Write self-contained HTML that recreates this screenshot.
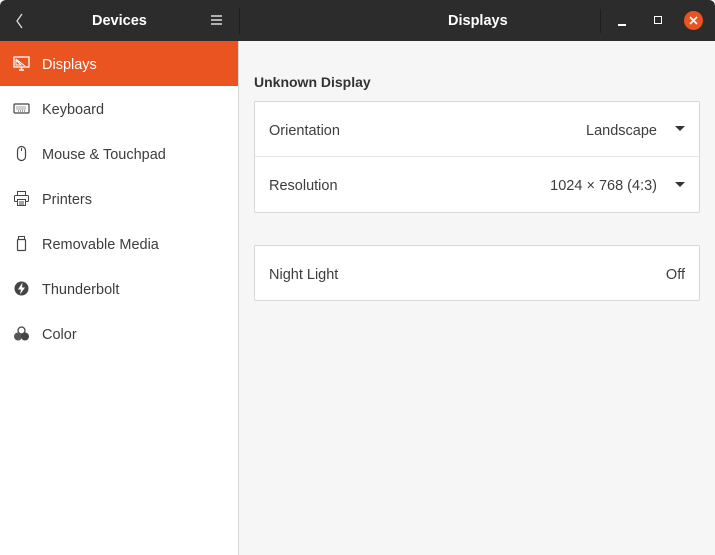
<!DOCTYPE html>
<html><head><style>
*{margin:0;padding:0;box-sizing:border-box}
body{width:715px;height:555px;overflow:hidden;font-family:"Liberation Sans",sans-serif;font-size:14px;color:#3d3d3d;background:#f6f6f7;position:relative}
.hdr{position:absolute;left:0;top:0;width:715px;height:41px;background:#2c2c2c;border-radius:6px 6px 0 0;color:#fff}
.side{position:absolute;left:0;top:41px;width:239px;height:514px;background:#fff;border-right:1px solid #d6d6d6}
.row{height:45px;display:flex;align-items:center;padding-left:42px;padding-top:2px;position:relative;color:#3d3d3d;font-size:14.5px}
.row.sel{background:#e95420;color:#fff}
.ic{position:absolute;left:13px;top:14px;width:17px;height:17px}
.main{position:absolute;left:240px;top:41px;right:0;bottom:0}
.box{position:absolute;left:14px;width:446px;background:#fff;border:1px solid #d8d8d8;border-radius:2px}
.br{height:55px;display:flex;align-items:center;padding:3px 14px 0;justify-content:space-between;font-size:14.5px}
.tri{display:inline-block;width:0;height:0;border-left:5px solid transparent;border-right:5px solid transparent;border-top:5px solid #333;margin-left:18px;vertical-align:middle;position:relative;top:-2px}
</style></head><body>
<div class="hdr">
<svg style="position:absolute;left:15px;top:13px" width="10" height="16"><path d="M7 1 L2 8 L7 15" stroke="#ddd" stroke-width="1.3" fill="none"/></svg>
<div style="position:absolute;left:92px;top:13px;font-weight:bold;font-size:14.5px">Devices</div>
<svg style="position:absolute;left:211px;top:15px" width="11" height="10"><path d="M0 1H11M0 5H11M0 9H11" stroke="#fff" stroke-width="1.2"/></svg>
<div style="position:absolute;left:239px;top:8px;width:1px;height:26px;background:#1e1e1e"></div>
<div style="position:absolute;left:448px;top:13px;font-weight:bold;font-size:14.5px">Displays</div>
<div style="position:absolute;left:600px;top:9px;width:1px;height:24px;background:#1e1e1e"></div>
<div style="position:absolute;left:618px;top:24px;width:8px;height:1.5px;background:#fff"></div>
<div style="position:absolute;left:654px;top:16px;width:8px;height:8px;border:1.3px solid #fff"></div>
<div style="position:absolute;left:684px;top:11px;width:19px;height:19px;border-radius:50%;background:#e95420"></div>
<svg style="position:absolute;left:689px;top:16px" width="9" height="9"><path d="M1 1L8 8M8 1L1 8" stroke="#fff" stroke-width="1.6"/></svg>
</div>
<div class="side">
<div class="row sel"><svg class="ic" viewBox="0 0 17 17"><rect x="1" y="2" width="15" height="10" fill="none" stroke="#fff" stroke-width="1.3"/><path d="M3 4L12 11M3 10L3 5L8 10Z" stroke="#fff" fill="none"/><path d="M6 15H11M8.5 12V15" stroke="#fff" stroke-width="1.5"/></svg>Displays</div>
<div class="row"><svg class="ic" viewBox="0 0 17 17"><rect x="1" y="4" width="15" height="9" rx="1" fill="none" stroke="#444" stroke-width="1.2"/><path d="M3.5 7H13.5M3.5 9H13.5M5 11H12" stroke="#444" stroke-dasharray="1 1"/></svg>Keyboard</div>
<div class="row"><svg class="ic" viewBox="0 0 17 17"><rect x="4.5" y="1.5" width="8" height="14" rx="4" fill="none" stroke="#444" stroke-width="1.2"/><path d="M8.5 3V6" stroke="#444"/></svg>Mouse &amp; Touchpad</div>
<div class="row"><svg class="ic" viewBox="0 0 17 17"><rect x="4.5" y="1.5" width="8" height="4" fill="none" stroke="#444"/><rect x="1.5" y="5.5" width="14" height="6" rx="1" fill="none" stroke="#444"/><rect x="4.5" y="9.5" width="8" height="6" fill="#fff" stroke="#444"/><path d="M6 12H11M6 14H11" stroke="#444"/></svg>Printers</div>
<div class="row"><svg class="ic" viewBox="0 0 17 17"><rect x="5.5" y="1.5" width="6" height="3" fill="none" stroke="#444"/><rect x="4.5" y="4.5" width="8" height="11" rx="1" fill="none" stroke="#444" stroke-width="1.2"/></svg>Removable Media</div>
<div class="row"><svg class="ic" viewBox="0 0 17 17"><circle cx="8.5" cy="8.5" r="7" fill="#444"/><path d="M9.5 2.5L5 9.5H8L7 14.5L12 7.5H9Z" fill="#fff"/></svg>Thunderbolt</div>
<div class="row"><svg class="ic" viewBox="0 0 17 17"><circle cx="8.5" cy="5.5" r="3.5" fill="none" stroke="#444" stroke-width="1.3"/><circle cx="5" cy="11.5" r="4" fill="#555"/><circle cx="12" cy="11.5" r="4" fill="#444"/></svg>Color</div>
</div>
<div class="main">
<div style="position:absolute;left:14px;top:33px;font-weight:bold;font-size:14px;color:#333">Unknown Display</div>
<div class="box" style="top:60px;height:112px">
<div class="br" style="border-bottom:1px solid #e4e4e4"><span>Orientation</span><span>Landscape<i class="tri"></i></span></div>
<div class="br"><span>Resolution</span><span>1024 × 768 (4:3)<i class="tri"></i></span></div>
</div>
<div class="box" style="top:204px;height:56px">
<div class="br"><span>Night Light</span><span>Off</span></div>
</div>
</div>
</body></html>
